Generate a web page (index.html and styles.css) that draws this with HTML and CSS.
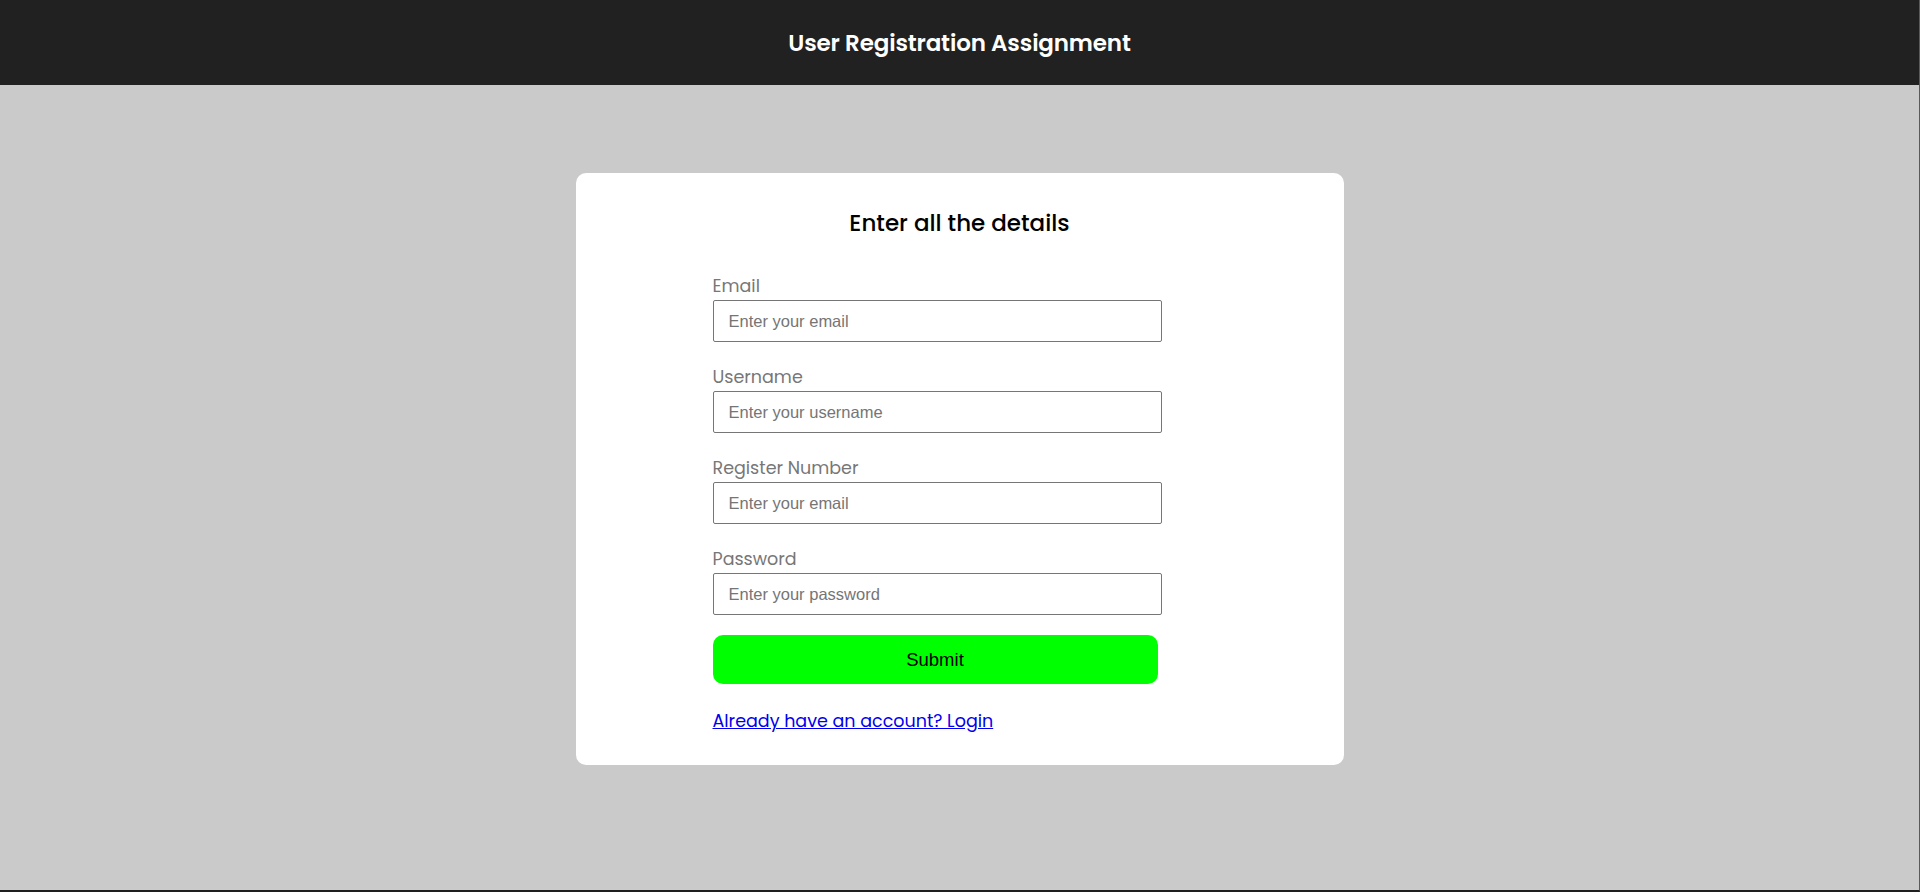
FILE: index.html
```html
<!DOCTYPE html>
<html lang="en">
<head>
<meta charset="utf-8">
<title>User Registration Assignment</title>
<link rel="stylesheet" href="styles.css">
</head>
<body>
<div class="page">
  <header class="topbar">
    <h1 class="topbar-title">User Registration Assignment</h1>
  </header>
  <main class="main">
    <section class="card">
      <h2 class="card-title">Enter all the details</h2>
      <form class="form">
        <div class="field">
          <label class="field-label" for="email">Email</label>
          <input class="field-input" id="email" type="email" placeholder="Enter your email">
        </div>
        <div class="field">
          <label class="field-label" for="username">Username</label>
          <input class="field-input" id="username" type="text" placeholder="Enter your username">
        </div>
        <div class="field">
          <label class="field-label" for="regno">Register Number</label>
          <input class="field-input" id="regno" type="text" placeholder="Enter your email">
        </div>
        <div class="field field-last">
          <label class="field-label" for="password">Password</label>
          <input class="field-input" id="password" type="password" placeholder="Enter your password">
        </div>
        <button class="submit" type="button">Submit</button>
        <a class="login-link" href="#">Already have an account? Login</a>
      </form>
    </section>
  </main>
</div>
</body>
</html>
```
FILE: styles.css
```css
* { box-sizing: border-box; }

html, body {
  margin: 0;
  padding: 0;
}

body {
  background: #cacaca;
  font-family: "Poppins", "Open Sans", "Noto Sans", sans-serif;
}

.page {
  min-height: 100vh;
  border-right: 1px solid #5a5a5a;
  border-bottom: 2px solid #1f1f1f;
  display: flex;
  flex-direction: column;
}

.topbar {
  height: 85px;
  background: #212121;
  display: flex;
  align-items: center;
  justify-content: center;
}

.topbar-title {
  margin: 0;
  color: #ffffff;
  font-size: 23px;
  font-weight: 600;
  letter-spacing: -0.15px;
}

.main {
  flex: 1;
  padding-top: 88px;
}

.card {
  width: 768px;
  margin: 0 auto;
  background: #ffffff;
  border-radius: 10px;
  padding: 32px 0 31px 0;
}

.card-title {
  margin: 0 0 32px 0;
  text-align: center;
  font-size: 23px;
  line-height: 36px;
  font-weight: 500;
  color: #000000;
}

.form {
  margin-left: 137px;
  width: 449px;
  display: flex;
  flex-direction: column;
}

.field {
  display: flex;
  flex-direction: column;
  margin-bottom: 22px;
}

.field-last {
  margin-bottom: 20px;
}

.field-label {
  font-size: 17.5px;
  line-height: 26px;
  color: #777777;
  margin-bottom: 1px;
}

.field-input {
  height: 42px;
  width: 449px;
  border: 1px solid #767676;
  border-radius: 2px;
  padding: 0 15px;
  font-family: "Liberation Sans", Arial, sans-serif;
  font-size: 16.5px;
  color: #000;
  background: #fff;
}

.field-input::placeholder {
  color: #757575;
}

.submit {
  width: 445px;
  height: 49px;
  border: none;
  border-radius: 10px;
  background: #00ff00;
  color: #000;
  font-family: "Liberation Sans", Arial, sans-serif;
  font-size: 18.5px;
  cursor: pointer;
}

.login-link {
  margin-top: 24px;
  align-self: flex-start;
  font-size: 17.5px;
  line-height: 26px;
  color: #0000ee;
  text-decoration: underline;
}
```
